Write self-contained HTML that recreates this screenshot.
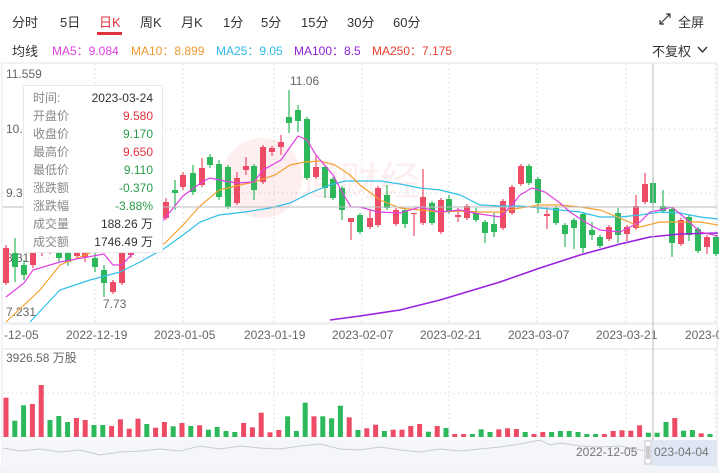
<!DOCTYPE html>
<html><head><meta charset="utf-8"><style>
html,body{margin:0;padding:0;background:#fff;}
body{width:719px;height:473px;overflow:hidden;position:relative;font-family:"Liberation Sans","Noto Sans CJK SC",sans-serif;}
.t{position:absolute;font-size:13px;color:#333;white-space:nowrap;}
.m{position:absolute;font-size:12px;white-space:nowrap;top:42px;}
</style></head><body>
<div class="t" style="left:12px;top:12px">分时</div>
<div class="t" style="left:60px;top:12px">5日</div>
<div class="t" style="left:99px;top:12px;color:#e0323c">日K</div>
<div style="position:absolute;left:97px;top:32px;width:25px;height:3px;background:#e0323c"></div>
<div class="t" style="left:140px;top:12px">周K</div>
<div class="t" style="left:181px;top:12px">月K</div>
<div class="t" style="left:223px;top:12px">1分</div>
<div class="t" style="left:261px;top:12px">5分</div>
<div class="t" style="left:301px;top:12px">15分</div>
<div class="t" style="left:347px;top:12px">30分</div>
<div class="t" style="left:393px;top:12px">60分</div>
<svg style="position:absolute;left:659px;top:13px" width="12" height="12" viewBox="0 0 12 12"><path d="M1 11L11 1M7 1H11V5M1 7V11H5" stroke="#333" stroke-width="1.2" fill="none"/></svg>
<div class="t" style="left:678px;top:12px">全屏</div>
<div class="m" style="left:12px;color:#333;font-size:13px;top:41px">均线</div>
<div class="m" style="left:52px;color:#e040e0">MA5：9.084</div>
<div class="m" style="left:131px;color:#f09a30">MA10：8.899</div>
<div class="m" style="left:216px;color:#30b8e8">MA25：9.05</div>
<div class="m" style="left:294px;color:#9020d0">MA100：8.5</div>
<div class="m" style="left:372px;color:#e84030">MA250：7.175</div>
<div class="t" style="left:652px;top:41px">不复权</div>
<svg style="position:absolute;left:697px;top:46px" width="11" height="8" viewBox="0 0 11 8"><path d="M1 1L5.5 6L10 1" stroke="#333" stroke-width="1.4" fill="none"/></svg>

<svg style="position:absolute;left:0;top:0" width="719" height="473" viewBox="0 0 719 473">
<rect x="2" y="63" width="715" height="402" fill="none" stroke="#e3e6ea"/>
<rect x="2" y="440" width="715" height="26" fill="#f4f6f9"/>
<rect x="0" y="466" width="719" height="7" fill="#f2f4f7"/>
<g stroke="#d6d9de" stroke-dasharray="1.5,3">
<line x1="3" y1="129" x2="717" y2="129"/><line x1="3" y1="193" x2="717" y2="193"/><line x1="3" y1="258" x2="717" y2="258"/>
<line x1="3" y1="393" x2="717" y2="393"/>
<line x1="95" y1="64" x2="95" y2="322"/><line x1="183" y1="64" x2="183" y2="322"/><line x1="274" y1="64" x2="274" y2="322"/><line x1="362" y1="64" x2="362" y2="322"/><line x1="449" y1="64" x2="449" y2="322"/><line x1="537" y1="64" x2="537" y2="322"/><line x1="626" y1="64" x2="626" y2="322"/><line x1="715" y1="64" x2="715" y2="322"/>
<line x1="95" y1="350" x2="95" y2="437"/><line x1="183" y1="350" x2="183" y2="437"/><line x1="274" y1="350" x2="274" y2="437"/><line x1="362" y1="350" x2="362" y2="437"/><line x1="449" y1="350" x2="449" y2="437"/><line x1="537" y1="350" x2="537" y2="437"/><line x1="626" y1="350" x2="626" y2="437"/><line x1="715" y1="350" x2="715" y2="437"/>
</g>
<rect x="2" y="322" width="715" height="3" fill="#f0f1f3"/>
<line x1="2" y1="349" x2="717" y2="349" stroke="#e3e6ea"/>
<g opacity="0.08"><circle cx="262" cy="178" r="40" fill="#e8303c"/><text x="300" y="195" font-size="40" fill="#e8303c" font-family="Noto Sans CJK SC,sans-serif">通财经</text></g>
<g font-size="12" fill="#666">
<text x="6" y="78">11.559</text><text x="6" y="133">10.4</text><text x="6" y="197">9.3</text><text x="6" y="262">8.31</text><text x="6" y="316">7.231</text>
<text x="290" y="85">11.06</text><text x="103" y="308">7.73</text>
<text x="4" y="339">-12-05</text><text x="66" y="339">2022-12-19</text><text x="154" y="339">2023-01-05</text><text x="244" y="339">2023-01-19</text><text x="332" y="339">2023-02-07</text><text x="420" y="339">2023-02-21</text><text x="508" y="339">2023-03-07</text><text x="596" y="339">2023-03-21</text><text x="685" y="339">2023-0</text>
<text x="6" y="362">3926.58 万股</text>
</g>
<g id="candles"></g>
<g fill="none" stroke-width="1.2">
<polyline stroke="#9a20e0" stroke-width="1.6" points="330,320 360,316 400,310 440,300 500,282 540,268 580,255 620,244 650,237 680,234 718,233"/>
<polyline stroke="#30c0e8" points="30,322 60,290 90,280 120,272 140,262 165,248 183,235 200,222 219,215 245,212 270,208 290,203 310,193 330,185 345,181 360,181 380,181 400,184 420,188 440,190 460,195 480,205 500,206 520,206 540,208 560,210 580,212 600,217 620,217 640,215 660,212 680,213 700,217 718,219"/>
<polyline stroke="#f5a030" points="6,322 40,290 60,265 110,245 150,250 165,243 183,225 200,206 219,190 240,185 254,182 275,175 290,165 305,162 320,161 335,165 350,175 360,185 380,200 400,208 420,210 440,212 460,211 480,212 500,212 520,208 540,205 560,205 580,207 600,210 620,218 640,227 660,222 680,222 700,222 718,225"/>
<polyline stroke="#e040e0" points="6,297 24,283 33,270 60,262 104,254 113,265 122,265 131,255 150,235 165,218 183,196 202,182 210,178 219,180 237,183 254,182 263,170 281,160 298,136 307,140 316,155 333,175 342,192 351,207 360,207 378,212 400,213 420,207 440,212 460,210 480,214 500,217 512,205 520,195 532,188 545,192 560,203 570,212 585,222 600,230 620,232 640,222 650,212 660,210 672,207 685,218 700,232 718,236"/>
</g>
<g id="vols"></g>
<line x1="3" y1="207" x2="717" y2="207" stroke="#bbb"/>
<line x1="653" y1="64" x2="653" y2="466" stroke="#bbb"/>
<polyline fill="none" stroke="#c8cbd0" points="3,448 20,451 40,449 60,452 80,450 100,455 120,452 140,451 160,449 180,451 200,446 220,449 240,446 260,448 280,449 300,446 320,444 340,449 360,450 380,447 400,450 420,452 440,449 460,451 480,449 500,447 520,444 540,440 550,445 560,443 580,446 600,447 620,446 640,450 660,452 680,450 700,451 717,450"/>
<rect x="652" y="440" width="65" height="26" fill="#dfe7f5"/>
<rect x="645" y="441" width="6" height="23" fill="#fff" stroke="#c0c4cc"/>
<line x1="647" y1="446" x2="647" y2="459" stroke="#999"/><line x1="649" y1="446" x2="649" y2="459" stroke="#999"/>
<text x="576" y="456" font-size="12" fill="#777">2022-12-05</text>
<text x="654" y="456" font-size="12" fill="#777">023-04-04</text>
</svg>

<div style="position:absolute;left:23px;top:85px;width:138px;height:166px;background:#fff;border:1px solid #e8e8e8;border-radius:2px;font-size:12px;line-height:18px;">
<div style="position:absolute;left:9px;top:3px;color:#888">时间:<br>开盘价<br>收盘价<br>最高价<br>最低价<br>涨跌额<br>涨跌幅<br>成交量<br>成交额</div>
<div style="position:absolute;right:9px;top:3px;text-align:right;color:#333">2023-03-24<br><span style="color:#e0323c">9.580</span><br><span style="color:#2a9d4a">9.170</span><br><span style="color:#e0323c">9.650</span><br><span style="color:#2a9d4a">9.110</span><br><span style="color:#2a9d4a">-0.370</span><br><span style="color:#2a9d4a">-3.88%</span><br>188.26 万<br>1746.49 万</div>
</div>
<script>
var R="#ee4b67",G="#2eb85c";
var C=[[6,248,283,245,285,R],[15,253,267,238,282,G],[24,265,275,260,280,G],[33,252,265,248,268,R],[42,240,252,236,256,R],[50,238,250,234,254,R],[59,245,258,240,262,G],[68,250,262,246,266,G],[77,244,256,240,258,R],[85,253,257,250,262,R],[95,258,267,250,272,G],[104,270,283,265,297,G],[113,282,292,280,294,R],[122,243,283,240,285,R],[131,240,255,235,258,R],[140,225,245,222,248,R],[148,215,235,212,238,R],[157,205,225,202,228,G],[166,202,218,198,220,R],[175,190,193,180,210,G],[183,175,187,172,190,R],[193,173,192,165,195,G],[202,168,185,158,187,R],[210,157,165,154,168,G],[219,164,197,160,200,G],[228,167,207,165,209,G],[237,178,203,172,205,R],[246,166,170,157,175,R],[254,166,190,164,200,G],[263,147,182,145,184,R],[272,148,152,146,156,R],[281,142,147,135,155,R],[289,117,123,90,133,G],[298,110,121,105,132,G],[307,119,178,117,180,G],[316,167,177,155,179,R],[325,167,188,165,198,G],[333,179,198,177,200,G],[342,188,210,186,220,G],[351,218,222,218,240,R],[360,215,232,213,234,G],[370,218,227,210,229,R],[378,188,225,186,227,R],[387,195,208,185,210,G],[396,210,224,208,226,R],[405,210,224,208,228,G],[414,213,214,213,236,R],[423,197,223,169,225,R],[432,203,223,201,225,G],[441,200,232,198,234,R],[449,199,212,195,214,G],[458,215,217,208,222,R],[467,206,218,204,220,R],[476,213,220,208,222,G],[485,222,233,220,243,G],[494,224,232,213,237,G],[503,201,228,199,230,R],[512,187,213,185,215,R],[521,166,184,164,186,R],[529,166,183,164,185,G],[538,179,203,177,213,G],[547,214,216,207,229,R],[556,208,223,206,225,G],[565,225,234,223,247,G],[574,220,228,218,249,G],[583,214,248,212,253,G],[592,230,235,222,240,G],[600,237,246,235,248,G],[609,227,239,225,241,R],[618,213,235,208,243,G],[627,227,234,225,241,R],[636,206,228,195,230,R],[645,184,202,173,204,R],[653,183,203,178,210,G],[663,206,211,190,213,G],[672,209,243,207,257,G],[681,220,244,218,246,R],[689,217,235,215,241,G],[698,229,251,227,253,G],[707,237,247,235,254,R],[716,237,254,235,256,G]];
var s="";C.forEach(function(c){s+='<line x1="'+c[0]+'" y1="'+c[3]+'" x2="'+c[0]+'" y2="'+c[4]+'" stroke="'+c[5]+'" stroke-width="1.2"/><rect x="'+(c[0]-3)+'" y="'+c[1]+'" width="6" height="'+Math.max(1,c[2]-c[1])+'" fill="'+c[5]+'"/>';});
document.getElementById("candles").innerHTML=s;
var V="r173 g242 g196 r192 r135 g240 g228 g246 r234 r240 g255 g255 r258 r238 r266 r236 g252 r263 r246 g259 r249 g258 r256 g269 g261 g273 g276 r249 r262 r218 r277 r270 g229 g273 g188 r229 g229 g235 g197 r232 g270 r265 r254 g273 r269 r269 r258 r252 g275 r258 g264 r282 r282 g282 g268 g276 r268 r265 r267 g276 r282 r276 g276 g273 g273 g276 g282 g282 r282 r273 r271 r272 r256 g278 g278 g246 r234 g272 g270 r280 g282".split(" ");
var v="";V.forEach(function(b,i){var t=340+parseInt(b.slice(1))/3;var x=6+i*8.8;v+='<rect x="'+(x-2.5).toFixed(1)+'" y="'+t.toFixed(1)+'" width="5" height="'+(437-t).toFixed(1)+'" fill="'+(b[0]=="r"?R:G)+'"/>';});
document.getElementById("vols").innerHTML=v;
</script>
</body></html>
